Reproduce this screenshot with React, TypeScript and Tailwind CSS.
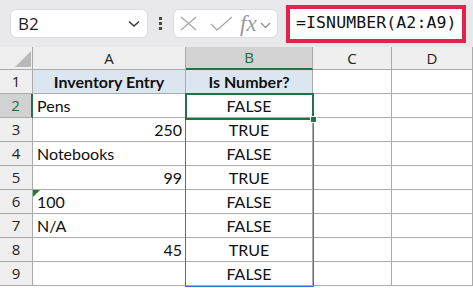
import React from "react";

const COLS = [
  { key: "A", width: "w-[153px]" },
  { key: "B", width: "w-[127px]" },
  { key: "C", width: "w-[79px]" },
  { key: "D", width: "w-[81px]" },
];

type Cell = { text: string; align: "left" | "right" | "center"; bold?: boolean; flag?: boolean };

const ROWS: { a: Cell; b: Cell }[] = [
  { a: { text: "Inventory Entry", align: "center", bold: true }, b: { text: "Is Number?", align: "center", bold: true } },
  { a: { text: "Pens", align: "left" }, b: { text: "FALSE", align: "center" } },
  { a: { text: "250", align: "right" }, b: { text: "TRUE", align: "center" } },
  { a: { text: "Notebooks", align: "left" }, b: { text: "FALSE", align: "center" } },
  { a: { text: "99", align: "right" }, b: { text: "TRUE", align: "center" } },
  { a: { text: "100", align: "left", flag: true }, b: { text: "FALSE", align: "center" } },
  { a: { text: "N/A", align: "left" }, b: { text: "FALSE", align: "center" } },
  { a: { text: "45", align: "right" }, b: { text: "TRUE", align: "center" } },
  { a: { text: "", align: "left" }, b: { text: "FALSE", align: "center" } },
];

const ALIGN: Record<string, string> = {
  left: "justify-start pl-[4px]",
  right: "justify-end pr-[3px]",
  center: "justify-center",
};

const DataCell = ({ cell, width, header }: { cell: Cell; width: string; header: boolean }) => (
  <div
    className={`relative flex items-center h-[24px] ${width} border-r border-b border-[#ababab] ${ALIGN[cell.align]} ${
      header ? "bg-[#dce6f0]" : "bg-white"
    } ${cell.bold ? "font-bold" : ""}`}
  >
    {cell.flag && (
      <svg className="absolute left-0 top-0" width="7" height="7" viewBox="0 0 7 7">
        <polygon points="0,0 7,0 0,7" fill="#1e7d32" />
      </svg>
    )}
    {cell.text}
  </div>
);

export default function App() {
  return (
    <div className="w-[473px] h-[288px] overflow-hidden bg-white text-[16px] text-[#111] font-['Lato',sans-serif]">
      {/* formula bar */}
      <div className="h-[47px] bg-[#e9e9ec] flex items-center pl-[10px]">
        <div className="w-[138px] h-[29px] bg-white rounded-[6px] border border-[#dcdcdc] flex items-center justify-between pl-[7px] pr-[7px]">
          <span className="text-[17px] font-['Open_Sans',sans-serif] text-[#222]">B2</span>
          <svg width="12" height="8" viewBox="0 0 12 8">
            <polyline points="1,1.5 6,6 11,1.5" fill="none" stroke="#333" strokeWidth="1.4" />
          </svg>
        </div>
        <div className="ml-[11px] flex flex-col gap-[2px]">
          <div className="w-[3px] h-[3px] bg-[#4a4838]" />
          <div className="w-[3px] h-[3px] bg-[#4a4838]" />
          <div className="w-[3px] h-[3px] bg-[#4a4838]" />
        </div>
        <div className="ml-[11px] w-[105px] h-[29px] bg-white rounded-[6px] border border-[#dcdcdc] flex items-center pl-[6px]">
          <svg width="17" height="15" viewBox="0 0 17 15">
            <line x1="1" y1="1" x2="16" y2="14" stroke="#a8a8a8" strokeWidth="1.3" />
            <line x1="16" y1="1" x2="1" y2="14" stroke="#a8a8a8" strokeWidth="1.3" />
          </svg>
          <svg className="ml-[13px]" width="23" height="15" viewBox="0 0 23 15">
            <polyline points="1,8 7,14 22,1" fill="none" stroke="#a8a8a8" strokeWidth="1.3" />
          </svg>
          <span className="ml-[7px] font-['Liberation_Serif',serif] italic text-[23px] text-[#9a9a9a] leading-none">
            fx
          </span>
          <svg className="ml-[3px] mt-[3px]" width="11" height="7" viewBox="0 0 11 7">
            <polyline points="1,1 5.5,5.5 10,1" fill="none" stroke="#888" strokeWidth="1.2" />
          </svg>
        </div>
        <div className="ml-[8px] w-[180px] h-[38px] bg-white border-[4px] border-[#e3234d] flex items-center pl-[6px]">
          <span className="font-['DejaVu_Sans_Mono',monospace] text-[16.5px] text-[#111] tracking-[0.1px]">
            =ISNUMBER(A2:A9)
          </span>
        </div>
      </div>

      {/* sheet */}
      <div className="relative">
        {/* column header row */}
        <div className="flex h-[23px] bg-[#efefef]">
          <div className="relative w-[33px] border-r border-b border-[#ababab]">
            <svg className="absolute left-[15px] top-[4px]" width="16" height="16" viewBox="0 0 16 16">
              <polygon points="16,0 16,16 0,16" fill="#b9b9b9" />
            </svg>
          </div>
          {COLS.map((c) => (
            <div
              key={c.key}
              className={`${c.width} flex items-center justify-center border-r font-['Open_Sans',sans-serif] text-[15px] ${
                c.key === "B"
                  ? "bg-[#d2d2d2] text-[#1e6b3c] border-b-2 border-b-[#217346] border-r-[#ababab]"
                  : "text-[#222] border-b border-[#ababab]"
              }`}
            >
              {c.key}
            </div>
          ))}
        </div>

        {ROWS.map((r, i) => {
          const n = i + 1;
          const active = n === 2;
          return (
            <div key={n} className="flex">
              <div
                className={`w-[33px] h-[24px] flex items-center justify-center border-b border-[#ababab] font-['Open_Sans',sans-serif] text-[15px] ${
                  active
                    ? "bg-[#d2d2d2] text-[#1e6b3c] border-r-2 border-r-[#217346]"
                    : "bg-[#efefef] text-[#222] border-r"
                }`}
              >
                {n}
              </div>
              <DataCell cell={r.a} width="w-[153px]" header={n === 1} />
              <DataCell cell={r.b} width="w-[127px]" header={n === 1} />
              <div className="w-[79px] h-[24px] border-r border-b border-[#ababab] bg-white" />
              <div className="w-[81px] h-[24px] border-r border-b border-[#ababab] bg-white" />
            </div>
          );
        })}

        {/* referenced range B2:B9 */}
        <div className="absolute left-[185px] top-[47px] w-[129px] h-[193px] border-[1.5px] border-[#3f6fcc] pointer-events-none" />
        {/* active cell B2 */}
        <div className="absolute left-[185px] top-[46px] w-[129px] h-[27px] border-2 border-[#217346] pointer-events-none" />
        <div className="absolute left-[310px] top-[69px] w-[7px] h-[7px] bg-[#217346] border border-white" />
      </div>
    </div>
  );
}
